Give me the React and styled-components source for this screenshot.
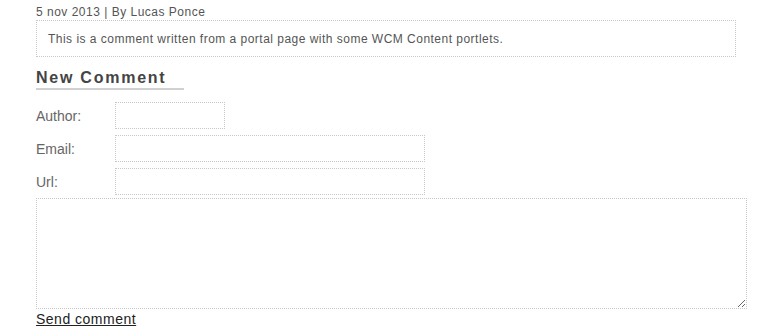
import React from "react";
import styled, { createGlobalStyle } from "styled-components";

const GlobalStyle = createGlobalStyle`
  body {
    margin: 0;
    background: #fff;
    font-family: "Liberation Sans", Arial, sans-serif;
  }
`;

export default function App() {
  return (
    <>
      <GlobalStyle />
      <Page>
        <CommentMeta>5 nov 2013 | By Lucas Ponce</CommentMeta>
        <CommentBox>
          This is a comment written from a portal page with some WCM Content
          portlets.
        </CommentBox>
        <Heading>New Comment</Heading>
        <Form onSubmit={(e) => e.preventDefault()}>
          <Row>
            <Label>Author:</Label>
            <Input $width={110} />
          </Row>
          <Row>
            <Label>Email:</Label>
            <Input $width={310} />
          </Row>
          <Row>
            <Label>Url:</Label>
            <Input $width={310} />
          </Row>
          <TextArea />
          <SendLink href="#">Send comment</SendLink>
        </Form>
      </Page>
    </>
  );
}

const Page = styled.div`
  padding: 5px 0 0 36px;
  width: 711px;
`;

const CommentMeta = styled.div`
  font-size: 12px;
  line-height: 15px;
  letter-spacing: 0.5px;
  color: #555;
`;

const CommentBox = styled.div`
  box-sizing: border-box;
  width: 700px;
  height: 37px;
  display: flex;
  align-items: center;
  padding: 0 11px;
  border: 1px dotted #c8c8c8;
  font-size: 12px;
  letter-spacing: 0.48px;
  color: #555;
`;

const Heading = styled.h3`
  display: inline-block;
  box-sizing: border-box;
  width: 148px;
  margin: 11px 0 0;
  font-size: 16px;
  line-height: 20px;
  font-weight: bold;
  letter-spacing: 1.75px;
  color: #444;
  border-bottom: 2px solid #d0d0d0;
`;

const Form = styled.form`
  display: flex;
  flex-direction: column;
  margin-top: 12px;
`;

const Row = styled.div`
  display: flex;
  align-items: center;
  height: 27px;
  margin-bottom: 6px;
`;

const Label = styled.label`
  width: 79px;
  font-size: 14px;
  color: #666;
`;

const Input = styled.input`
  box-sizing: border-box;
  width: ${(p) => p.$width}px;
  height: 27px;
  margin: 0;
  padding: 2px 4px;
  border: 1px dotted #c8c8c8;
  outline: none;
  background: #fff;
`;

const TextArea = styled.textarea`
  box-sizing: border-box;
  width: 711px;
  height: 111px;
  margin: -3px 0 0;
  padding: 4px;
  border: 1px dotted #c8c8c8;
  outline: none;
  font-family: "Liberation Sans", Arial, sans-serif;
`;

const SendLink = styled.a`
  align-self: flex-start;
  margin-top: 2px;
  font-size: 14px;
  line-height: 17px;
  letter-spacing: 0.5px;
  color: #222;
  text-decoration: underline;
`;
